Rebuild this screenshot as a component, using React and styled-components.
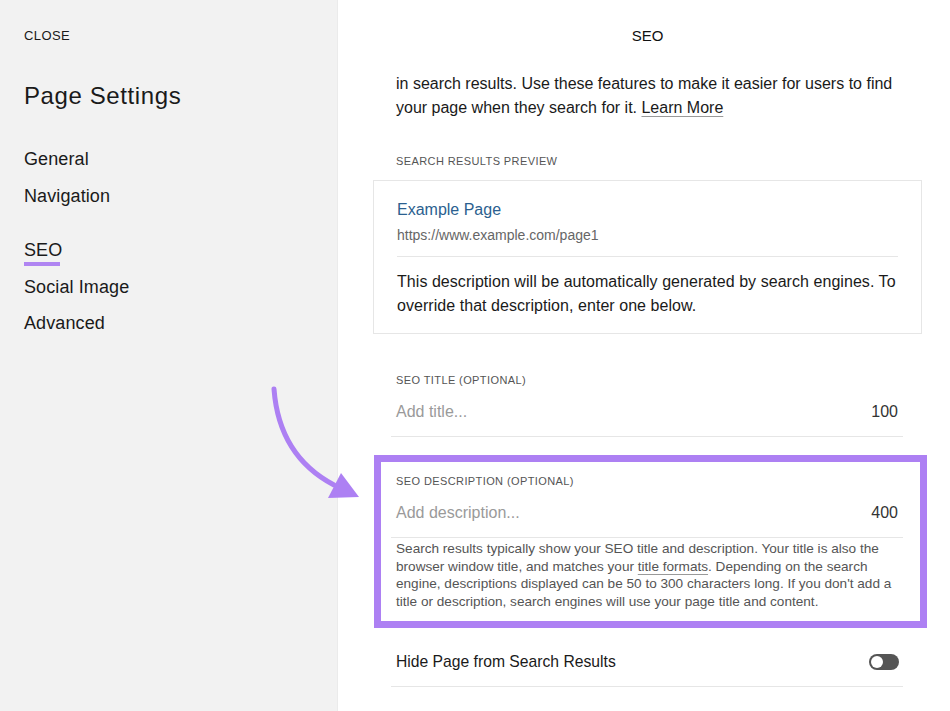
import React from "react";
import styled, { createGlobalStyle } from "styled-components";

const Global = createGlobalStyle`
  html, body { margin: 0; padding: 0; }
  body {
    font-family: "Liberation Sans", Arial, sans-serif;
    color: #1a1a1a;
    background: #ffffff;
  }
  * { box-sizing: border-box; }
`;

const Page = styled.div`
  position: relative;
  display: flex;
  width: 950px;
  height: 711px;
  overflow: hidden;
`;

const Sidebar = styled.aside`
  width: 338px;
  flex: none;
  background: #f2f2f2;
  border-right: 1px solid #ebebeb;
  padding: 0 24px;
  display: flex;
  flex-direction: column;
`;

const CloseLink = styled.div`
  height: 70px;
  display: flex;
  align-items: center;
  font-size: 13px;
  font-weight: 500;
  letter-spacing: 0.4px;
  text-transform: uppercase;
  color: #1a1a1a;
`;

const SidebarTitle = styled.h1`
  margin: 10px 0 0;
  font-size: 24px;
  line-height: 32px;
  font-weight: 400;
  letter-spacing: 0.6px;
`;

const NavGroup = styled.nav`
  display: flex;
  flex-direction: column;
  margin-top: ${(p) => p.$top}px;
  gap: ${(p) => p.$gap}px;
`;

const NavItem = styled.div`
  align-self: flex-start;
  font-size: 18px;
  line-height: 24px;
  letter-spacing: 0.1px;
  position: relative;
  color: #1a1a1a;
  ${(p) =>
    p.$active &&
    `
    &::after {
      content: "";
      position: absolute;
      left: 0;
      right: 2px;
      bottom: -4px;
      height: 4px;
      background: #b085f2;
    }
  `}
`;

const Main = styled.main`
  flex: 1;
  background: #ffffff;
  padding: 0 0 0 35px;
  display: flex;
  flex-direction: column;
`;

const Header = styled.div`
  width: 549px;
  height: 70px;
  display: flex;
  align-items: center;
  justify-content: center;
  font-size: 15px;
  font-weight: 500;
  color: #111;
`;

const Intro = styled.p`
  margin: 2px 0 0;
  padding: 0 40px 0 23px;
  font-size: 16px;
  line-height: 24px;
  color: #1a1a1a;
`;

const TextLink = styled.span`
  text-decoration: underline;
  text-decoration-color: #999;
  text-underline-offset: 3px;
  text-decoration-thickness: 1px;
`;

const SectionLabel = styled.div`
  margin-top: ${(p) => p.$top || 0}px;
  padding-left: ${(p) => p.$indent || 0}px;
  font-size: 11px;
  line-height: 16px;
  letter-spacing: 0.4px;
  text-transform: uppercase;
  color: #555;
`;

const PreviewCard = styled.div`
  margin-top: 11px;
  width: 549px;
  border: 1px solid #e6e6e6;
  padding: 19px 23px 15px 23px;
`;

const PreviewTitle = styled.div`
  font-size: 16px;
  line-height: 20px;
  color: #2b5f8f;
`;

const PreviewUrl = styled.div`
  margin-top: 6px;
  font-size: 14px;
  line-height: 18px;
  color: #666;
`;

const Divider = styled.div`
  height: 1px;
  background: #e6e6e6;
  margin-top: ${(p) => p.$top || 0}px;
`;

const PreviewText = styled.div`
  margin-top: 13px;
  font-size: 16px;
  line-height: 24px;
  letter-spacing: 0.05px;
  color: #1a1a1a;
`;

const Field = styled.div`
  margin: ${(p) => p.$top || 0}px 0 0 18px;
  width: 512px;
`;

const InputRow = styled.div`
  display: flex;
  justify-content: space-between;
  align-items: center;
  margin-top: 12px;
  padding: 0 5px 12px;
  border-bottom: 1px solid #e6e6e6;
  font-size: 16px;
  line-height: 24px;
`;

const Placeholder = styled.span`
  color: #9a9a9a;
`;

const Counter = styled.span`
  color: #333;
`;

const Highlight = styled.div`
  margin: 18px 0 0 1px;
  width: 553px;
  border: 7px solid #ad80f3;
  padding: 11px 17px 11px 10px;
`;

const HelpText = styled.p`
  margin: 2px 0 0;
  padding: 0 0 0 5px;
  width: 520px;
  font-size: 13.6px;
  line-height: 17.5px;
  color: #555;
`;

const ToggleRow = styled.div`
  margin: 10px 0 0 18px;
  width: 512px;
  height: 49px;
  padding: 0 4px 0 5px;
  display: flex;
  align-items: center;
  justify-content: space-between;
  border-bottom: 1px solid #e6e6e6;
  font-size: 15.7px;
  color: #1a1a1a;
`;

const Toggle = styled.div`
  position: relative;
  width: 30px;
  height: 16px;
  border-radius: 8px;
  background: #555;
  &::after {
    content: "";
    position: absolute;
    left: 2px;
    top: 2px;
    width: 12px;
    height: 12px;
    border-radius: 50%;
    background: #fff;
  }
`;

const ArrowLayer = styled.svg`
  position: absolute;
  left: 0;
  top: 0;
  pointer-events: none;
`;

export default function App() {
  return (
    <>
      <Global />
      <Page>
        <Sidebar>
          <CloseLink>Close</CloseLink>
          <SidebarTitle>Page Settings</SidebarTitle>
          <NavGroup $top={35} $gap={13}>
            <NavItem>General</NavItem>
            <NavItem>Navigation</NavItem>
          </NavGroup>
          <NavGroup $top={30} $gap={12.5}>
            <NavItem $active>SEO</NavItem>
            <NavItem>Social Image</NavItem>
            <NavItem>Advanced</NavItem>
          </NavGroup>
        </Sidebar>
        <Main>
          <Header>SEO</Header>
          <Intro>
            in search results. Use these features to make it easier for users to find your page
            when they search for it. <TextLink>Learn More</TextLink>
          </Intro>
          <SectionLabel $top={33} $indent={23}>
            Search Results Preview
          </SectionLabel>
          <PreviewCard>
            <PreviewTitle>Example Page</PreviewTitle>
            <PreviewUrl>https://www.example.com/page1</PreviewUrl>
            <Divider $top={12} />
            <PreviewText>
              This description will be automatically generated by search engines. To override
              that description, enter one below.
            </PreviewText>
          </PreviewCard>
          <Field $top={38}>
            <SectionLabel $indent={5}>SEO Title (Optional)</SectionLabel>
            <InputRow>
              <Placeholder>Add title...</Placeholder>
              <Counter>100</Counter>
            </InputRow>
          </Field>
          <Highlight>
            <SectionLabel $indent={5}>SEO Description (Optional)</SectionLabel>
            <InputRow>
              <Placeholder>Add description...</Placeholder>
              <Counter>400</Counter>
            </InputRow>
            <HelpText>
              Search results typically show your SEO title and description. Your title is also
              the
              <br />
              browser window title, and matches your <TextLink>title formats</TextLink>. Depending
              on the search
              <br />
              engine, descriptions displayed can be 50 to 300 characters long. If you don't add a
              <br />
              title or description, search engines will use your page title and content.
            </HelpText>
          </Highlight>
          <ToggleRow>
            <span>Hide Page from Search Results</span>
            <Toggle />
          </ToggleRow>
        </Main>
        <ArrowLayer width="950" height="711" viewBox="0 0 950 711">
          <path
            d="M274 389 Q279 456 334 485"
            fill="none"
            stroke="#ad80f3"
            strokeWidth="5"
            strokeLinecap="round"
          />
          <polygon points="328,498 359,497 341,473" fill="#ad80f3" />
        </ArrowLayer>
      </Page>
    </>
  );
}
